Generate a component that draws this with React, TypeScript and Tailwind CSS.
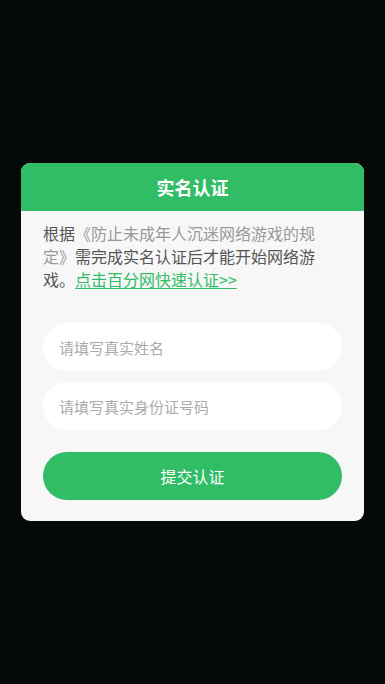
import { useState } from 'react';

const font = { fontFamily: '"Noto Sans CJK SC", "Noto Sans", sans-serif' };

export default function App() {
  const [name, setName] = useState('');
  const [idNo, setIdNo] = useState('');

  return (
    <div className="flex h-[684px] w-full items-center justify-center bg-[#050a07]" style={font}>
      <div className="w-[343px] overflow-hidden rounded-[9px] bg-[#f7f7f7]">
        <div className="flex h-[48px] items-center justify-center bg-[#30bd66] text-[18px] font-bold text-white">
          实名认证
        </div>

        <div className="px-[22px] pb-[21px]">
          <p className="w-[282px] pt-[11px] text-[16px] leading-[23px] text-[#555]">
            根据<span className="text-[#999]">《防止未成年人沉迷网络游戏的规定》</span>需完成实名认证后才能开始网络游戏。
            <a href="#" className="text-[#30bd66] underline underline-offset-2">点击百分网快速认证&gt;&gt;</a>
          </p>

          <div className="mt-[32px] flex flex-col gap-[11px]">
            <input
              value={name}
              onChange={(e) => setName(e.target.value)}
              placeholder="请填写真实姓名"
              className="h-[48px] w-full rounded-full bg-white px-4 text-[15px] text-[#333] outline-none placeholder:text-[#aaa]"
            />
            <input
              value={idNo}
              onChange={(e) => setIdNo(e.target.value)}
              placeholder="请填写真实身份证号码"
              className="h-[48px] w-full rounded-full bg-white px-4 text-[15px] text-[#333] outline-none placeholder:text-[#aaa]"
            />
          </div>

          <button className="mt-[22px] h-[48px] w-full rounded-full bg-[#30bd66] text-[16px] text-white">
            提交认证
          </button>
        </div>
      </div>
    </div>
  );
}
